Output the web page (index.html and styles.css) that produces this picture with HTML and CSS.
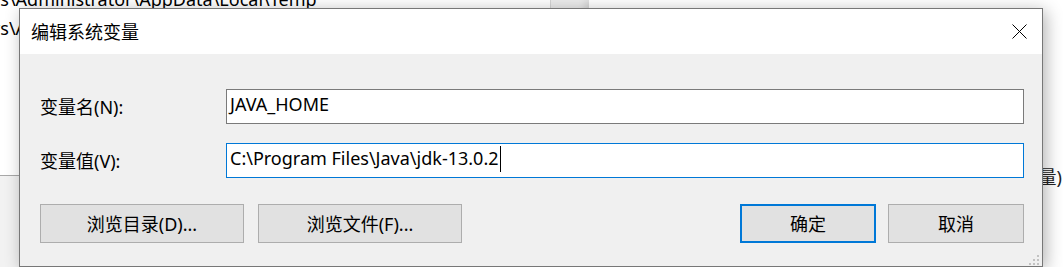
FILE: index.html
```html
<!DOCTYPE html>
<html lang="zh-CN">

<head>
    <meta charset="UTF-8">
    <title>编辑系统变量</title>
    <link rel="stylesheet" href="styles.css">
</head>

<body>
    <div class="backwin">
        <div class="paths">
            <div class="path">C:\Users\Administrator\AppData\Local\Temp</div>
            <div class="path">C:\Users\Administrator\AppData\Local\Temp</div>
        </div>
        <div class="scroll-top"></div>
        <div class="backwin-foot"></div>
    </div>

    <div class="sidewin">
        <span class="side-text">系统变量)</span>
    </div>

    <div class="dialog">
        <div class="titlebar">
            <span class="title">编辑系统变量</span>
            <svg class="close" width="15" height="15" viewBox="0 0 15 15">
                <path d="M0.5 0.5 L14.5 14.5 M14.5 0.5 L0.5 14.5" stroke="#000" stroke-width="1" fill="none" />
            </svg>
        </div>
        <div class="content">
            <div class="row">
                <label class="label">变量名(N):</label>
                <div class="field">JAVA_HOME</div>
            </div>
            <div class="row">
                <label class="label">变量值(V):</label>
                <div class="field focus">C:\Program Files\Java\jdk-13.0.2<span class="caret"></span></div>
            </div>
            <div class="actions">
                <div class="btn-group">
                    <button class="btn wide">浏览目录(D)...</button>
                    <button class="btn wide">浏览文件(F)...</button>
                </div>
                <div class="btn-group narrow-gap">
                    <button class="btn default">确定</button>
                    <button class="btn">取消</button>
                </div>
            </div>
            <svg class="grip" width="12" height="12" viewBox="0 0 12 12">
                <rect x="9" y="1" width="2" height="2" fill="#c2c2c2" />
                <rect x="5" y="5" width="2" height="2" fill="#c2c2c2" />
                <rect x="9" y="5" width="2" height="2" fill="#c2c2c2" />
                <rect x="1" y="9" width="2" height="2" fill="#c2c2c2" />
                <rect x="5" y="9" width="2" height="2" fill="#c2c2c2" />
                <rect x="9" y="9" width="2" height="2" fill="#c2c2c2" />
            </svg>
        </div>
    </div>
</body>

</html>
```

FILE: styles.css
```css
* {
    margin: 0;
    padding: 0;
    box-sizing: border-box;
}

body {
    position: relative;
    width: 1063px;
    height: 267px;
    overflow: hidden;
    background: #fff;
    color: #000;
    font-family: 'Noto Sans', 'Noto Sans CJK SC', sans-serif;
    font-size: 18px;
}

/* windows behind the dialog */
.backwin {
    position: absolute;
    left: 0;
    top: 0;
    width: 589px;
    height: 267px;
    background: #fff;
    overflow: hidden;
}

.paths {
    margin-top: -15px;
    margin-left: -62px;
}

.path {
    line-height: 29px;
    white-space: nowrap;
}

.scroll-top {
    position: absolute;
    top: 0;
    right: 0;
    width: 39px;
    height: 20px;
    background: #ececec;
    border-left: 1px solid #d4d4d4;
}

.backwin-foot {
    position: absolute;
    left: 0;
    top: 175px;
    width: 100%;
    height: 92px;
    background: #f2f2f2;
    border-top: 1px solid #a8a8a8;
}

.sidewin {
    position: absolute;
    left: 589px;
    top: 0;
    right: 0;
    height: 267px;
    background: #fff;
    box-shadow: -3px 0 8px rgba(0, 0, 0, 0.12);
}

.side-text {
    position: absolute;
    right: 1px;
    top: 163px;
    color: #222;
    white-space: nowrap;
}

/* dialog */
.dialog {
    position: absolute;
    left: 19px;
    top: 8px;
    width: 1024px;
    height: 259px;
    border: 1px solid #777;
    display: flex;
    flex-direction: column;
    box-shadow: 3px 3px 16px rgba(0, 0, 0, 0.3);
}

.titlebar {
    height: 45px;
    background: #fff;
    display: flex;
    align-items: center;
    justify-content: space-between;
    padding: 0 15px 0 11px;
}

.title {
    line-height: 24px;
}

.close {
    display: block;
}

.content {
    position: relative;
    flex: 1;
    background: #f0f0f0;
    padding: 35px 18px 0 20px;
    display: flex;
    flex-direction: column;
    gap: 19px;
}

.row {
    display: flex;
    align-items: center;
    height: 35px;
}

.label {
    width: 186px;
    padding-left: 0;
    line-height: 24px;
}

.field {
    flex: 1;
    height: 35px;
    background: #fff;
    border: 1px solid #7a7a7a;
    padding: 2px 0 0 3px;
    line-height: 24px;
    white-space: nowrap;
}

.field.focus {
    border-color: #0078d7;
}

.caret {
    display: inline-block;
    width: 1px;
    height: 26px;
    background: #000;
    vertical-align: -7px;
    margin-left: 1px;
}

.actions {
    display: flex;
    justify-content: space-between;
    margin-top: 7px;
}

.btn-group {
    display: flex;
    gap: 14px;
}

.btn-group.narrow-gap {
    gap: 12px;
}

.btn {
    width: 136px;
    height: 39px;
    background: #e1e1e1;
    border: 1px solid #adadad;
    font-family: inherit;
    font-size: 18px;
    color: #000;
    line-height: 24px;
}

.btn.wide {
    width: 204px;
}

.btn.default {
    border: 2px solid #0078d7;
}

.grip {
    position: absolute;
    right: 2px;
    bottom: 0;
}
```
